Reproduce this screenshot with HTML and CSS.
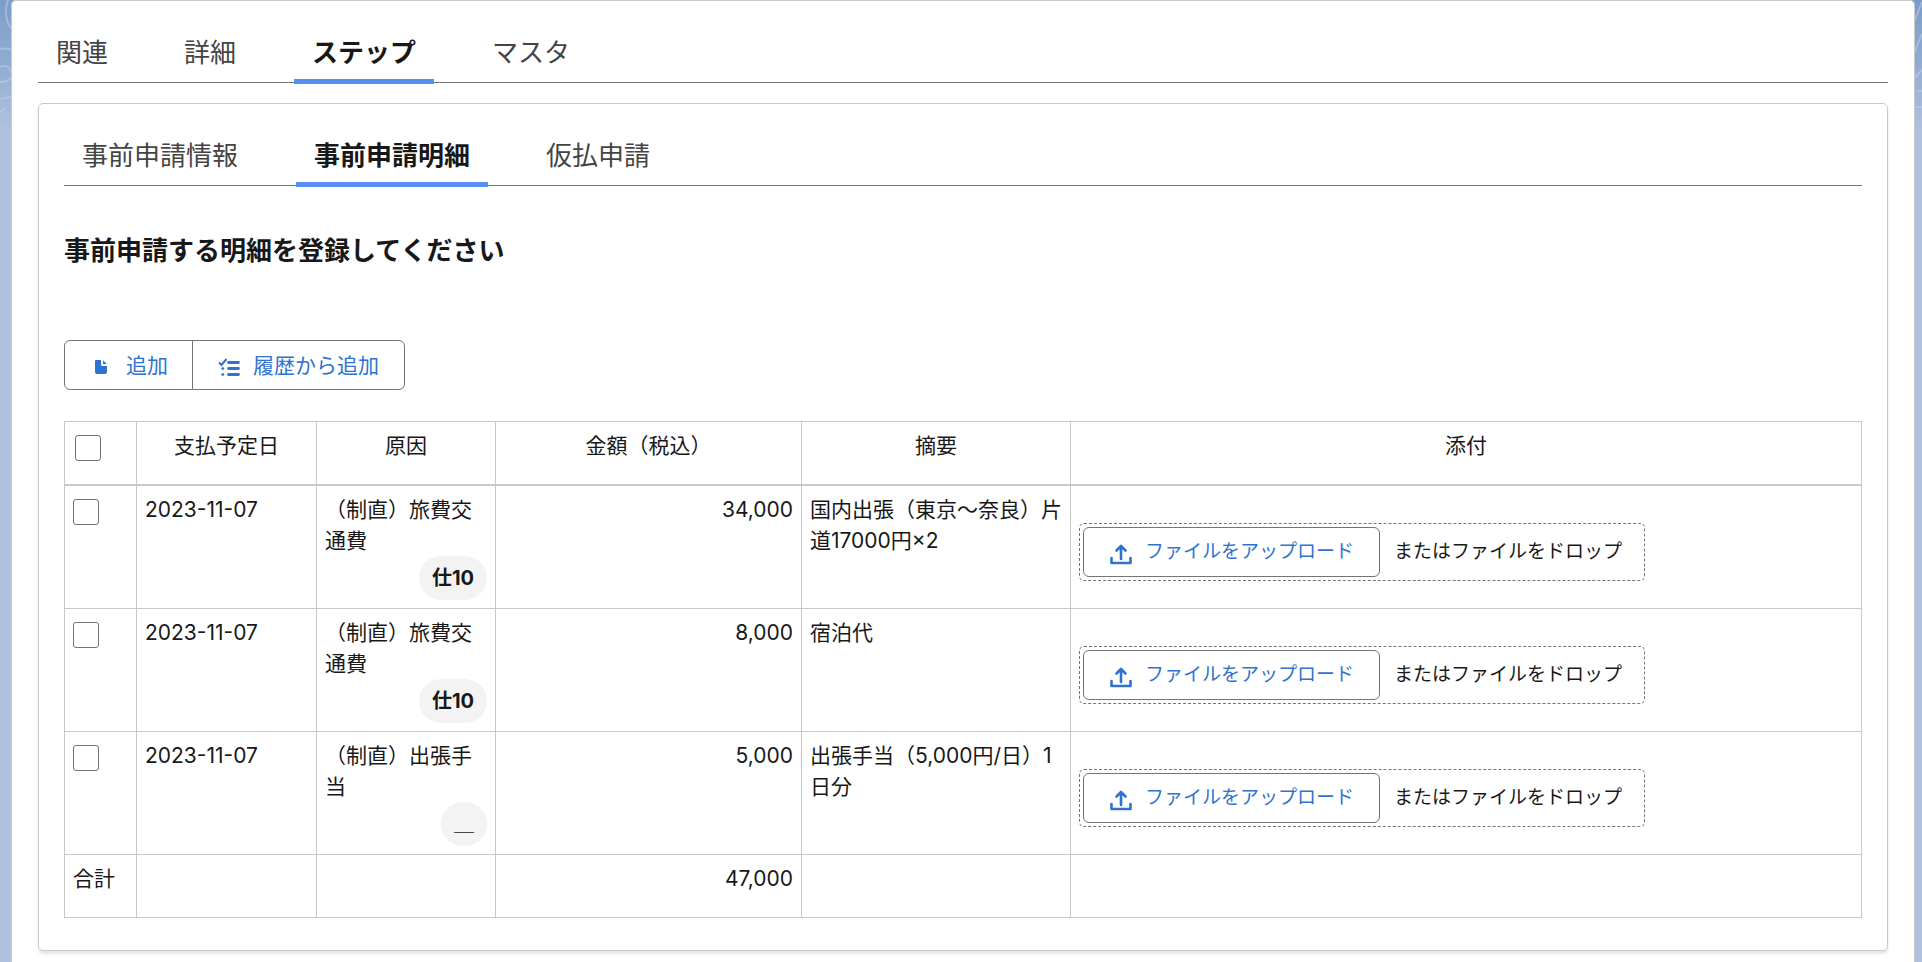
FILE: index.html
```html
<!DOCTYPE html>
<html lang="ja">
<head>
<meta charset="utf-8">
<title>事前申請明細</title>
<link rel="stylesheet" href="styles.css">
</head>
<body>
<svg class="defs" aria-hidden="true">
  <symbol id="upload" viewBox="0 0 24 22"><path d="M12 16V3.500M7.500 7.500 12 3 16.500 7.500" fill="none" stroke="currentColor" stroke-width="2.600" stroke-linecap="round" stroke-linejoin="round"/><path d="M2.500 15v5h19v-5" fill="none" stroke="currentColor" stroke-width="2.600" stroke-linecap="round" stroke-linejoin="round"/></symbol>
</svg>
<svg class="swirl swirl-left" viewBox="0 0 12 120" aria-hidden="true"><path d="M9-2C4 8 5 22 12 29M-2 50q8-3 14 0M-2 68c5-4 13-2 14 5s-8 11-14 8M-2 101q5-4 14-4M0 112l6-4"/></svg>
<svg class="swirl swirl-right" viewBox="0 0 8 120" aria-hidden="true"><path d="M8 2 0 22M8 34 0 53M8 70 0 79M3 91h6M0 107h8"/></svg>
<main class="page">
  <nav class="tabs" role="tablist">
    <button class="tab" role="tab">関連</button>
    <button class="tab" role="tab">詳細</button>
    <button class="tab active" role="tab" aria-selected="true">ステップ</button>
    <button class="tab" role="tab">マスタ</button>
  </nav>
  <section class="card">
    <nav class="tabs" role="tablist">
      <button class="tab" role="tab">事前申請情報</button>
      <button class="tab active" role="tab" aria-selected="true">事前申請明細</button>
      <button class="tab" role="tab">仮払申請</button>
    </nav>
    <h1 class="title">事前申請する明細を登録してください</h1>
    <div class="actions">
      <button class="action"><svg class="icon-file" viewBox="0 0 14 16" aria-hidden="true"><path fill="currentColor" d="M2 1h5v4.500Q7 7 8.500 7H13v6q0 2-2 2H3q-2 0-2-2V2q0-1 1-1z"/><path fill="currentColor" d="M9 1.200 12.800 5H9z"/></svg>追加</button>
      <button class="action"><svg class="icon-list" viewBox="0 0 22 20" aria-hidden="true"><path d="M1 5.500 3.500 8 8.500 2" fill="none" stroke="currentColor" stroke-width="2"/><path d="M10.500 5.500h10M10.500 11.500h10M10.500 17.500h10" stroke="currentColor" stroke-width="2.800" stroke-linecap="round"/><path d="M4.500 11.500h.5M4.500 17.500h.5" stroke="currentColor" stroke-width="2.600" stroke-linecap="round"/></svg>履歴から追加</button>
    </div>
    <table class="grid">
      <colgroup><col class="c-check"><col class="c-date"><col class="c-cause"><col class="c-amount"><col class="c-note"><col></colgroup>
      <thead>
        <tr><th class="check-all"><input class="check" type="checkbox" aria-label="すべて選択"></th><th>支払予定日</th><th>原因</th><th>金額（税込）</th><th>摘要</th><th>添付</th></tr>
      </thead>
      <tbody>
        <tr>
          <td><input class="check" type="checkbox" aria-label="1行目を選択"></td><td>2023-11-07</td>
          <td class="cause">（制直）旅費交通費<div class="badge-row"><span class="badge">仕10</span></div></td>
          <td class="num">34,000</td><td>国内出張（東京〜奈良）片道17000円×2</td>
          <td class="files"><div class="drop"><button class="upload"><svg class="icon-up" aria-hidden="true"><use href="#upload"/></svg>ファイルをアップロード</button><span>またはファイルをドロップ</span></div></td>
        </tr>
        <tr>
          <td><input class="check" type="checkbox" aria-label="2行目を選択"></td><td>2023-11-07</td>
          <td class="cause">（制直）旅費交通費<div class="badge-row"><span class="badge">仕10</span></div></td>
          <td class="num">8,000</td><td>宿泊代</td>
          <td class="files"><div class="drop"><button class="upload"><svg class="icon-up" aria-hidden="true"><use href="#upload"/></svg>ファイルをアップロード</button><span>またはファイルをドロップ</span></div></td>
        </tr>
        <tr>
          <td><input class="check" type="checkbox" aria-label="3行目を選択"></td><td>2023-11-07</td>
          <td class="cause">（制直）出張手当<div class="badge-row"><span class="badge plain">＿</span></div></td>
          <td class="num">5,000</td><td>出張手当（5,000円/日）1日分</td>
          <td class="files"><div class="drop"><button class="upload"><svg class="icon-up" aria-hidden="true"><use href="#upload"/></svg>ファイルをアップロード</button><span>またはファイルをドロップ</span></div></td>
        </tr>
      </tbody>
      <tfoot>
        <tr><td>合計</td><td></td><td></td><td class="num">47,000</td><td></td><td></td></tr>
      </tfoot>
    </table>
  </section>
</main>
</body>
</html>
```
FILE: styles.css
```css
* { box-sizing: border-box; }
html { background: #b0c1de; }
body {
  margin: 0;
  padding: 0 7px 0 11px;
  min-height: 100vh;
  display: flex;
  background: linear-gradient(#7b9dca 0, #8fabd2 60px, #b0c1de 130px);
  color: #181818;
  font-family: Inter, "Noto Sans CJK JP", sans-serif;
  font-size: 21px;
  line-height: 31px;
}
button { font: inherit; cursor: pointer; }
.defs { position: absolute; width: 0; height: 0; }
.swirl { position: absolute; top: 0; height: 120px; fill: none; stroke: #c3d1e8; stroke-width: 2; stroke-opacity: .5; }
.swirl-left { left: 0; width: 12px; }
.swirl-right { right: 0; width: 8px; }
.page {
  position: relative;
  flex: 1;
  min-width: 0;
  padding: 18px 26px 12px;
  background: #fff;
  border: 1px solid #c9c9c9;
  border-bottom: 0;
  border-radius: 5px 5px 0 0;
}
.tabs { display: flex; gap: 40px; border-bottom: 1px solid #747474; }
.tab {
  position: relative;
  height: 63px;
  padding: 5px 18px 0;
  border: 0;
  background: none;
  color: #444;
  font-size: 26px;
  line-height: 58px;
}
.tab.active { color: #181818; font-weight: 700; }
.tab.active::after {
  content: "";
  position: absolute;
  left: 0;
  right: 0;
  bottom: -2px;
  height: 5px;
  background: #5790f2;
}
.card {
  margin-top: 20px;
  padding: 18px 25px 32px;
  border: 1px solid #c9c9c9;
  border-radius: 5px;
  box-shadow: 0 3px 3px rgba(0, 0, 0, .1);
}
.title { margin: 45px 0 70px; font-size: 26px; line-height: 39px; font-weight: 700; }
.actions { display: flex; margin-bottom: 31px; }
.action, .upload {
  display: flex;
  align-items: center;
  height: 50px;
  border: 1px solid #747474;
  background: #fff;
  color: #2f73d0;
}
.action { padding: 0 24px 0 29px; }
.action:first-child { border-radius: 6px 0 0 6px; }
.action + .action { margin-left: -1px; padding: 0 25px; border-radius: 0 6px 6px 0; }
.icon-file { width: 14px; height: 16px; margin: 4px 18px 0 0; }
.icon-list { width: 22px; height: 20px; margin: 4px 13px 0 0; }
.grid { width: 100%; table-layout: fixed; border-collapse: collapse; }
.c-check { width: 72px; }
.c-date { width: 180px; }
.c-cause { width: 179px; }
.c-amount { width: 306px; }
.c-note { width: 269px; }
.grid th, .grid td {
  padding: 8px 6px 8px 8px;
  border: 1px solid #c9c9c9;
  vertical-align: top;
  text-align: left;
  font-weight: 400;
}
.grid th { height: 63px; padding-right: 8px; text-align: center; }
.grid thead th { border-bottom-width: 2px; }
.grid .check-all { padding-left: 10px; text-align: left; }
.grid tfoot td { height: 63px; }
.grid .num, .grid .cause { padding-right: 8px; }
.grid .num { text-align: right; }
.check {
  appearance: none;
  display: block;
  width: 26px;
  height: 26px;
  margin: 5px 0 0;
  border: 1px solid #747474;
  border-radius: 3px;
  background: #fff;
}
.badge-row { display: flex; justify-content: flex-end; }
.badge {
  padding: 0 13px;
  border-radius: 22px;
  background: #f3f3f3;
  font-size: 20px;
  font-weight: 700;
  line-height: 44px;
}
.badge.plain { font-weight: 400; }
.grid .files { padding-top: 37px; }
.drop {
  display: flex;
  align-items: center;
  width: fit-content;
  padding: 3px 22px 3px 3px;
  border: 1px dashed #747474;
  border-radius: 5px;
  gap: 14px;
  font-size: 19px;
}
.upload { padding: 0 25px; border-radius: 6px; }
.icon-up { width: 24px; height: 22px; margin: 4px 12px 0 0; }
```
